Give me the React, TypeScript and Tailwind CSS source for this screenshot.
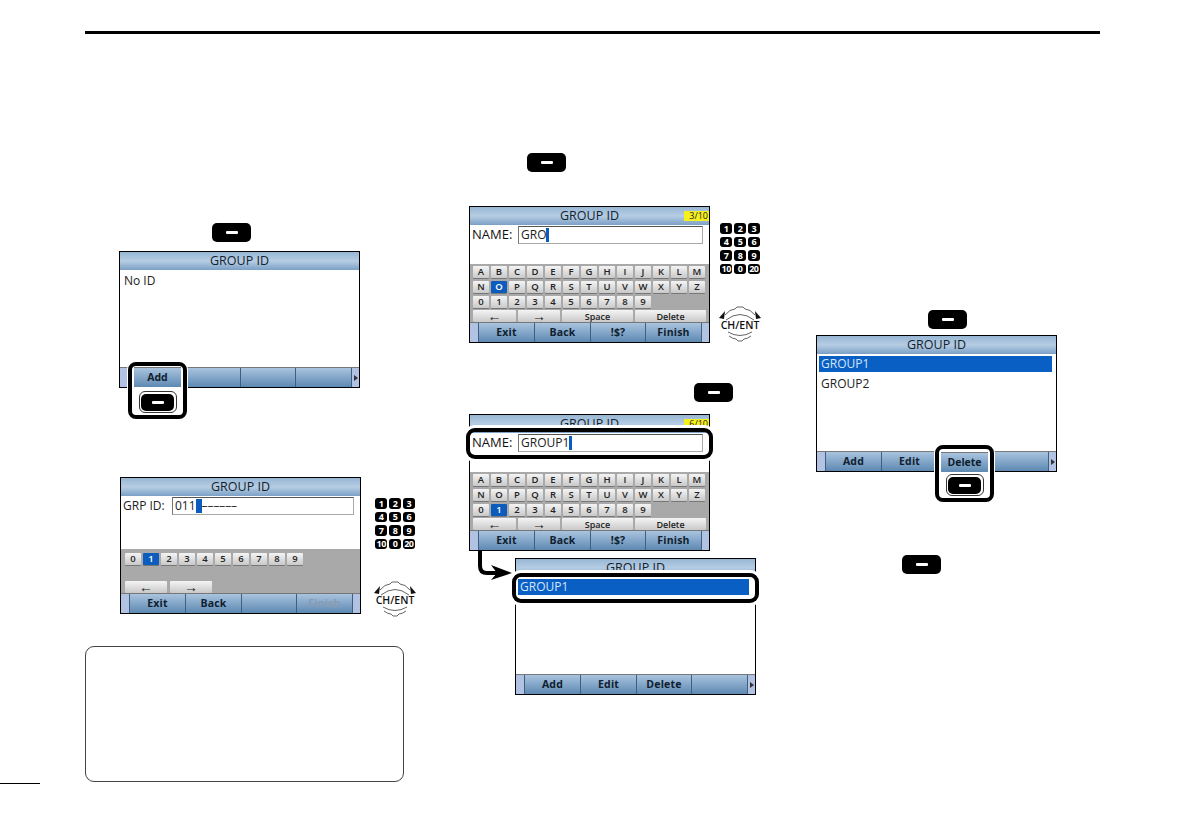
import type { ReactNode } from "react";

const LETTERS_1 = ["A", "B", "C", "D", "E", "F", "G", "H", "I", "J", "K", "L", "M"];
const LETTERS_2 = ["N", "O", "P", "Q", "R", "S", "T", "U", "V", "W", "X", "Y", "Z"];
const DIGITS = ["0", "1", "2", "3", "4", "5", "6", "7", "8", "9"];
const PAD = ["1", "2", "3", "4", "5", "6", "7", "8", "9", "10", "0", "20"];

const SoftKeyIcon = ({ className = "" }: { className?: string }) => (
  <div className={`flex h-[19px] w-[39px] items-center justify-center rounded-[5px] bg-black ${className}`}>
    <div className="h-[3px] w-[12px] rounded-[1px] bg-white" />
  </div>
);

const KeypadIcon = () => (
  <div className="grid w-[40px] grid-cols-3 gap-x-[1.5px] gap-y-[3px]">
    {PAD.map((n) => (
      <div
        key={n}
        className="flex h-[10.5px] items-center justify-center rounded-[3px] bg-black text-[9px] leading-none font-bold tracking-[-0.5px] text-white"
      >
        {n}
      </div>
    ))}
  </div>
);

const DialIcon = () => (
  <svg width="44" height="36" viewBox="0 0 44 36" fill="none" stroke="#222" strokeWidth="0.7">
    <path d="M7 9 Q12 3 17 3 L19 1 L25 1 L27 3 Q32 3 37 9" />
    <path d="M8 14 Q22 3 36 14" />
    <path d="M10 26 Q22 33 34 26" />
    <path d="M11 30 Q15 33 18 33 L20 35 L24 35 L26 33 Q29 33 33 30" />
    <polygon points="1,12 7,5 6,13" fill="#111" stroke="none" />
    <polygon points="43,12 37,5 38,13" fill="#111" stroke="none" />
    <text x="22" y="22.5" textAnchor="middle" fontSize="10.5" fontWeight="600" fill="#111" stroke="none" fontFamily="Open Sans, sans-serif">
      CH/ENT
    </text>
  </svg>
);

const SoftKey = ({ label, dim }: { label?: string; dim?: boolean }) => (
  <div
    className={`flex items-center justify-center border-r border-[#3f5f80] bg-gradient-to-b from-[#a9c4df] to-[#5e89b2] pt-[1px] text-[10.5px] font-bold tracking-[0.2px] ${
      dim ? "text-[#8a9bb0]" : "text-[#10202f]"
    }`}
  >
    {label}
  </div>
);

const SoftBar = ({ labels, more, dim }: { labels: string[]; more?: boolean; dim?: string }) => (
  <div className="grid h-[20px] grid-cols-[9px_56px_56px_55px_56px_1fr] border-t border-[#777]">
    <div className="border-r border-[#3f5f80] bg-[#b1c2e2]" />
    {labels.map((label, i) => (
      <SoftKey key={i} label={label} dim={label === dim} />
    ))}
    <div className="flex items-center justify-center bg-[#b1c2e2]">
      {more && (
        <svg width="4" height="6" viewBox="0 0 4 6">
          <polygon points="0,0 4,3 0,6" fill="#333" />
        </svg>
      )}
    </div>
  </div>
);

const Screen = ({ children, soft, className = "" }: { children?: ReactNode; soft: ReactNode; className?: string }) => (
  <div className={`relative flex h-[137px] w-[241px] flex-col border border-black bg-white ${className}`}>
    <div className="flex h-[18px] items-center justify-center bg-gradient-to-b from-[#97b6d4] via-[#b6cde3] to-[#7ba0c6] text-[12.5px] text-[#14222e]">
      GROUP ID
    </div>
    <div className="relative flex min-h-0 flex-1 flex-col">{children}</div>
    {soft}
  </div>
);

const KbKey = ({
  label,
  active,
  className = "w-[16px]",
  text = "text-[9.5px]",
}: {
  label: string;
  active?: boolean;
  className?: string;
  text?: string;
}) => (
  <div
    className={`flex h-[12px] items-center justify-center rounded-[1px] leading-none font-semibold shadow-[0_1px_0_#777] ${text} ${className} ${
      active ? "bg-[#0b5cbd] text-white" : "bg-gradient-to-b from-[#f4f4f4] to-[#c9c9c9] text-[#222]"
    }`}
  >
    {label}
  </div>
);

const NameField = ({ value }: { value: string }) => (
  <div className="mt-[1px] flex h-[18px] items-center pl-[2px] text-[12px] text-[#111]">
    <span className="w-[46px] text-[13px]">NAME:</span>
    <div className="flex h-[18px] w-[185px] items-center border border-t-[#555] border-r-[#aaa] border-b-[#aaa] border-l-[#777] pl-[2px] text-[#222]">
      {value}
      <span className="h-[14px] w-[3px] bg-[#0b5cbd]" />
    </div>
  </div>
);

const Keyboard = ({ active }: { active: string }) => (
  <div className="mt-auto flex h-[58px] flex-col gap-[2.75px] bg-[#a9a9a9] px-[3px] pt-[2px]">
    <div className="flex gap-[2px]">
      {LETTERS_1.map((k) => (
        <KbKey key={k} label={k} />
      ))}
    </div>
    <div className="flex gap-[2px]">
      {LETTERS_2.map((k) => (
        <KbKey key={k} label={k} active={k === active} />
      ))}
    </div>
    <div className="flex gap-[2px]">
      {DIGITS.map((k) => (
        <KbKey key={k} label={k} active={k === active} />
      ))}
    </div>
    <div className="flex gap-[2px]">
      <KbKey label="←" className="w-[43px]" text="text-[14px]" />
      <KbKey label="→" className="w-[42px]" text="text-[14px]" />
      <KbKey label="Space" className="w-[71px]" text="text-[9px]" />
      <KbKey label="Delete" className="w-[71px]" text="text-[9px]" />
    </div>
  </div>
);

const KeyCallout = ({ label, className, keyGap }: { label: string; className: string; keyGap: string }) => (
  <div className={`absolute h-[57px] w-[59px] rounded-[8px] border-4 border-black bg-white px-[2px] shadow-[0_0_0_1px_#fff] ${className}`}>
    <div className={`flex h-[20px] items-center justify-center border-t border-[#777] bg-gradient-to-b from-[#a9c4df] to-[#5e89b2] text-[10.5px] font-bold text-[#10202f] ${keyGap}`}>
      {label}
    </div>
    <div className="mx-auto flex h-[22px] w-[38px] items-center justify-center rounded-[6px] border border-[#333]">
      <SoftKeyIcon className="!h-[17px] !w-[33px]" />
    </div>
  </div>
);

const LineCallout = ({ className }: { className: string }) => (
  <div className={`absolute w-[247px] rounded-[9px] border-4 border-black shadow-[0_0_0_3px_#fff] ${className}`} />
);

const GroupRow = ({ label, active, className = "w-[233px]" }: { label: string; active?: boolean; className?: string }) => (
  <div className={`ml-[2px] flex h-[16px] items-center pl-[2px] text-[12px] ${className} ${active ? "bg-[#0a5fc4] text-[#d5e6fa]" : "text-[#222]"}`}>
    {label}
  </div>
);

export default function App() {
  return (
    <div className="relative h-[839px] w-[1191px] overflow-hidden bg-white font-['Open_Sans',sans-serif]">
      <div className="mx-[85px] mt-[31px] h-[3px] w-[1015px] bg-black" />
      <div className="flex">
        {/* left column */}
        <div className="ml-[85px] flex w-[384px] flex-col">
          <SoftKeyIcon className="mt-[189px] ml-[127px]" />
          <Screen className="mt-[9px] ml-[34px]" soft={<SoftBar labels={["", "", "", ""]} more />}>
            <div className="mt-[2px] pl-[4px] text-[12px] text-[#222]">No ID</div>
            <KeyCallout label="Add" keyGap="mt-[1px] mb-[4px]" className="top-[92px] left-[8px] z-10" />
          </Screen>
          <div className="mt-[89px] ml-[35px] flex">
            <Screen soft={<SoftBar labels={["Exit", "Back", "", "Finish"]} dim="Finish" />}>
              <div className="mt-[1px] flex h-[18px] items-center pl-[2px] text-[12px] text-[#222]">
                <span className="w-[49px]">GRP ID:</span>
                <div className="flex h-[18px] w-[182px] items-center border border-t-[#555] border-r-[#aaa] border-b-[#aaa] border-l-[#777] pl-[2px]">
                  011
                  <span className="h-[14px] w-[6px] bg-[#0b5cbd]" />
                  <span className="tracking-[-0.1px] text-[#333]">––––––</span>
                </div>
              </div>
              <div className="mt-auto flex h-[44px] flex-col justify-between bg-[#a9a9a9] px-[4px] pt-[4px]">
                <div className="flex gap-[2px]">
                  {DIGITS.map((k) => (
                    <KbKey key={k} label={k} active={k === "1"} />
                  ))}
                </div>
                <div className="flex gap-[3px]">
                  <KbKey label="←" className="w-[42px]" text="text-[14px]" />
                  <KbKey label="→" className="w-[42px]" text="text-[14px]" />
                </div>
              </div>
            </Screen>
            <div className="ml-[12px] flex flex-col items-center">
              <div className="mt-[21px]">
                <KeypadIcon />
              </div>
              <div className="mt-[32px]">
                <DialIcon />
              </div>
            </div>
          </div>
          <div className="mt-[29px] h-[136px] w-[319px] rounded-[9px] border-[1.5px] border-[#444]" />
        </div>

        {/* middle column */}
        <div className="flex w-[347px] flex-col">
          <SoftKeyIcon className="mt-[119px] ml-[58px]" />
          <div className="mt-[34px] flex">
            <Screen soft={<SoftBar labels={["Exit", "Back", "!$?", "Finish"]} />}>
              <NameField value="GRO" />
              <Keyboard active="O" />
              <div className="absolute -top-[14px] left-[214px] flex h-[10px] w-[25px] items-center justify-end bg-[#f5f01e] pr-[1px] text-[9px] text-[#222]">
                3/10
              </div>
            </Screen>
            <div className="ml-[8px] flex flex-col items-center">
              <div className="mt-[17px]">
                <KeypadIcon />
              </div>
              <div className="mt-[32px]">
                <DialIcon />
              </div>
            </div>
          </div>
          <SoftKeyIcon className="mt-[40px] ml-[225px]" />
          <Screen className="mt-[12px]" soft={<SoftBar labels={["Exit", "Back", "!$?", "Finish"]} />}>
            <NameField value="GROUP1" />
            <Keyboard active="1" />
            <div className="absolute -top-[14px] left-[214px] flex h-[10px] w-[25px] items-center justify-end bg-[#f5f01e] pr-[1px] text-[9px] text-[#222]">
              6/10
            </div>
            <LineCallout className="-top-[5px] -left-[4px] h-[31px]" />
          </Screen>
          <div className="relative mt-[7px] ml-[46px]">
            <Screen soft={<SoftBar labels={["Add", "Edit", "Delete", ""]} more />}>
              <div className="mt-[2px]">
                <GroupRow label="GROUP1" active className="w-[231px]" />
              </div>
              <LineCallout className="-top-[4px] -left-[4px] h-[30px]" />
            </Screen>
            <svg className="absolute -top-[7px] -left-[40px]" width="40" height="30" viewBox="0 0 40 30" fill="none">
              <path d="M5 0 V15 Q5 22 12 22 H24" stroke="#000" strokeWidth="4" />
              <polygon points="37,22 16,14 22,22 16,29" fill="#000" />
            </svg>
          </div>
        </div>

        {/* right column */}
        <div className="flex flex-col">
          <SoftKeyIcon className="mt-[276px] ml-[112px]" />
          <Screen className="mt-[6px]" soft={<SoftBar labels={["Add", "Edit", "", ""]} more />}>
            <div className="mt-[2px] flex flex-col gap-[4px]">
              <GroupRow label="GROUP1" active />
              <GroupRow label="GROUP2" />
            </div>
            <KeyCallout label="Delete" keyGap="mt-[3px] mb-[2px]" className="top-[91px] left-[118px] z-10" />
          </Screen>
          <SoftKeyIcon className="mt-[83px] ml-[86px]" />
        </div>
      </div>
      <div className="absolute top-[783px] left-0 h-px w-[40px] bg-black" />
    </div>
  );
}
